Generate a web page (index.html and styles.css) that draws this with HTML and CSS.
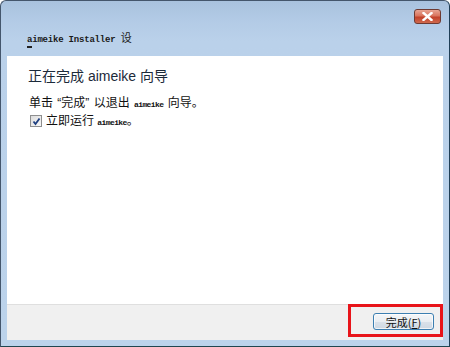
FILE: index.html
```html
<!DOCTYPE html>
<html>
<head>
<meta charset="utf-8">
<link rel="stylesheet" href="styles.css">
</head>
<body>
<div class="window">
  <div class="titlebar">
    <div class="title"><span class="mn">a</span>imeike Installer <span class="cjk">设</span></div>
    <div class="close">
      <svg width="11" height="9" viewBox="0 0 11 9"><path d="M1.5 1 L9.5 8 M9.5 1 L1.5 8" stroke="#fff" stroke-width="2.4" stroke-linecap="square"/></svg>
    </div>
  </div>
  <div class="content">
    <h1 class="heading">正在完成 aimeike 向导</h1>
    <p class="line">单击 “完成” 以退出 <span class="mono">aimeike</span> 向导。</p>
    <label class="check-row">
      <span class="checkbox">
        <svg width="9" height="9" viewBox="0 0 9 9"><path d="M1.5 4.5 L3.5 7 L7.5 1.5" fill="none" stroke="#1e3f80" stroke-width="1.8"/></svg>
      </span>
      <span class="check-text">立即运行 <span class="mono">aimeike</span>。</span>
    </label>
  </div>
  <div class="footer">
    <div class="highlight">
      <button class="btn">完成(<u>F</u>)</button>
    </div>
  </div>
</div>
</body>
</html>
```
FILE: styles.css
```css
html, body {
  margin: 0;
  padding: 0;
  background: #ffffff;
}
.window {
  width: 450px;
  height: 347px;
  box-sizing: border-box;
  border: 1px solid #44566c;
  border-right-color: #1f3e56;
  border-bottom-color: #1f4650;
  border-radius: 6px 6px 0 0;
  background: linear-gradient(#a9c2de 0px, #b3cbe6 20px, #bad1ea 40px, #bcd3eb 100%);
  padding: 0 6px 6px 6px;
  display: flex;
  flex-direction: column;
  font-family: "Noto Sans CJK SC", "Noto Sans", sans-serif;
}
.titlebar {
  height: 55px;
  display: flex;
  align-items: flex-start;
  flex-shrink: 0;
}
.title {
  margin-top: 29px;
  margin-left: 20px;
  font-family: "Liberation Mono", "Noto Sans CJK SC", monospace;
  font-size: 9px;
  font-weight: bold;
  color: #1a1a1a;
  line-height: 14px;
  letter-spacing: -0.2px;
}
.title .cjk {
  font-family: "Noto Sans CJK SC", sans-serif;
  font-weight: normal;
  font-size: 11px;
  letter-spacing: 0;
}
.mn {
  display: inline-block;
  border-bottom: 2px solid #222;
  line-height: 12px;
}
.close {
  margin-left: auto;
  margin-top: 8px;
  margin-right: 2px;
  width: 27px;
  height: 15px;
  box-sizing: border-box;
  border: 1px solid #6e3a32;
  border-radius: 3px;
  background: linear-gradient(#e8a493 0%, #d9745d 45%, #c2412a 55%, #cf6a4e 100%);
  display: flex;
  align-items: center;
  justify-content: center;
}
.content {
  flex: 1;
  background: #ffffff;
  padding: 10px 21px 0 21px;
}
.heading {
  margin: 0;
  height: 20px;
  font-family: "Liberation Sans", "Noto Sans CJK SC", sans-serif;
  font-size: 14px;
  font-weight: normal;
  color: #1c2a3a;
  line-height: 20px;
}
.line {
  margin: 9px 0 0 1px;
  height: 16px;
  font-family: "Liberation Sans", "Noto Sans CJK SC", sans-serif;
  font-size: 12px;
  line-height: 16px;
  word-spacing: 1px;
  color: #111;
}
.mono {
  font-family: "Liberation Mono", monospace;
  font-weight: bold;
  font-size: 8px;
  line-height: 1;
  letter-spacing: -0.6px;
  word-spacing: 0;
}
.check-row {
  display: flex;
  align-items: center;
  gap: 4px;
  height: 16px;
  margin: 2px 0 0 2px;
  font-family: "Liberation Sans", "Noto Sans CJK SC", sans-serif;
  font-size: 12px;
  line-height: 16px;
  color: #111;
}
.check-text {
  height: 16px;
}
.checkbox {
  width: 12px;
  height: 12px;
  box-sizing: border-box;
  border: 1px solid #8e8f8f;
  background: linear-gradient(135deg, #dcdcdc, #f8f8f8);
  display: flex;
  align-items: center;
  justify-content: center;
}
.footer {
  height: 36px;
  flex-shrink: 0;
  box-sizing: border-box;
  background: #f0f0f0;
  border-top: 1px solid #dfdfdf;
  display: flex;
  justify-content: flex-end;
  align-items: flex-start;
}
.highlight {
  margin-top: -1px;
  width: 95px;
  height: 33px;
  box-sizing: border-box;
  border: 3px solid #e8141a;
  padding: 6px 6px 0 22px;
  display: flex;
}
.btn {
  width: 61px;
  height: 17px;
  box-sizing: border-box;
  border: 1px solid #3c7fb1;
  border-radius: 3px;
  background: linear-gradient(#f4f6f8 0%, #eaeef2 50%, #dbe2ea 51%, #cfd8e2 100%);
  box-shadow: inset 0 0 0 1px rgba(255,255,255,0.7);
  padding: 0;
  font-family: "Noto Sans CJK SC", sans-serif;
  font-size: 11px;
  line-height: 14px;
  color: #111;
}
```
